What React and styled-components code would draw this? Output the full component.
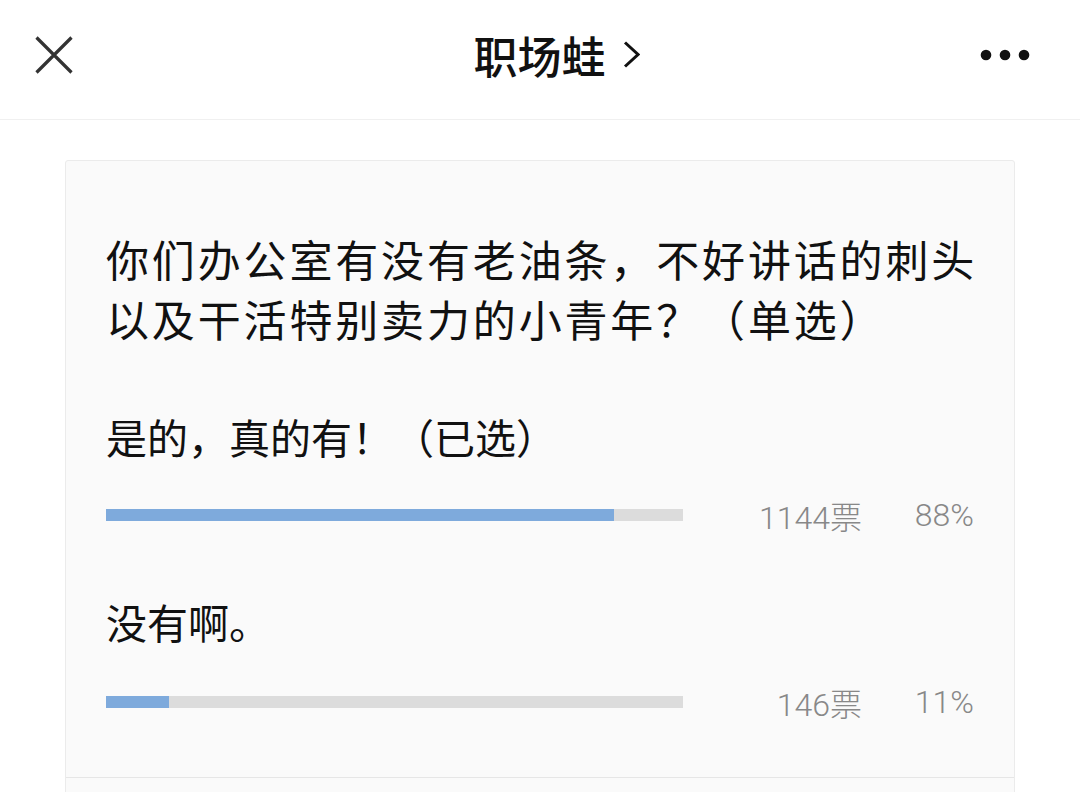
import React from 'react';
import styled, { createGlobalStyle } from 'styled-components';

const GlobalStyle = createGlobalStyle`
  html, body {
    margin: 0;
    padding: 0;
    background: #ffffff;
    font-family: "Noto Sans CJK SC", "Noto Sans", sans-serif;
  }
`;

const Page = styled.div`
  width: 1080px;
  height: 792px;
  overflow: hidden;
  background: #fff;
`;

const Header = styled.div`
  height: 120px;
  border-bottom: 1px solid #f0f0f0;
  display: grid;
  grid-template-columns: 1fr auto 1fr;
  align-items: center;
  padding: 0 50px 10px 35px;
  box-sizing: border-box;
`;

const IconBtn = styled.div`
  display: flex;
  align-items: center;
  justify-content: ${p => p.align || 'center'};
`;

const Title = styled.div`
  display: flex;
  align-items: center;
  gap: 17px;
  font-size: 44px;
  font-weight: 500;
  color: #111;
  margin-left: 48px;
`;

const Body = styled.div`
  padding: 40px 65px 0;
`;

const Card = styled.div`
  background: #fafafa;
  border: 1px solid #ebebeb;
  border-radius: 3px;
  height: 700px;
`;

const Inner = styled.div`
  padding: 67px 40px 55px;
  border-bottom: 1px solid #e6e6e6;
`;

const Question = styled.div`
  font-size: 43px;
  line-height: 60px;
  color: #111;
  letter-spacing: 2.85px;
  white-space: nowrap;
`;

const Option = styled.div`
  margin-top: ${p => (p.first ? '58px' : '56px')};
`;

const OptionText = styled.div`
  font-size: 41px;
  line-height: 60px;
  color: #111;
`;

const StatRow = styled.div`
  display: flex;
  align-items: center;
  margin-top: ${p => (p.first ? '29px' : '31px')};
  height: 40px;
`;

const Track = styled.div`
  width: 577px;
  height: 12px;
  background: #dcdcdc;
  flex: none;
`;

const Fill = styled.div`
  height: 100%;
  background: #7eaadc;
`;

const Count = styled.div`
  width: 179px;
  text-align: right;
  font-size: 32px;
  font-weight: 300;
  color: #888;
  font-family: "Roboto", "Noto Sans CJK SC", sans-serif;
`;

const Percent = styled.div`
  width: 112px;
  text-align: right;
  font-size: 32px;
  font-weight: 300;
  color: #888;
  font-family: "Roboto", "Noto Sans", sans-serif;
`;

const options = [
  { text: '是的，真的有！（已选）', votes: 1144, pct: 88, fill: 508 },
  { text: '没有啊。', votes: 146, pct: 11, fill: 63 },
];

export default function App() {
  return (
    <Page>
      <GlobalStyle />
      <Header>
        <IconBtn align="flex-start">
          <svg width="38" height="38" viewBox="0 0 38 38">
            <path d="M1.5 1.5 L36.5 36.5 M36.5 1.5 L1.5 36.5" stroke="#333" strokeWidth="3.2" fill="none" />
          </svg>
        </IconBtn>
        <Title>
          职场蛙
          <svg width="17" height="27" viewBox="0 0 17 27">
            <path d="M2 1.5 L15 13.5 L2 25.5" stroke="#111" strokeWidth="3" fill="none" />
          </svg>
        </Title>
        <IconBtn align="flex-end">
          <svg width="50" height="12" viewBox="0 0 50 12">
            <circle cx="6" cy="6" r="5.3" fill="#111" />
            <circle cx="25" cy="6" r="5.3" fill="#111" />
            <circle cx="44" cy="6" r="5.3" fill="#111" />
          </svg>
        </IconBtn>
      </Header>
      <Body>
        <Card>
          <Inner>
            <Question>
              你们办公室有没有老油条，不好讲话的刺头<br />以及干活特别卖力的小青年？（单选）
            </Question>
            {options.map((o, i) => (
              <Option key={i} first={i === 0}>
                <OptionText>{o.text}</OptionText>
                <StatRow first={i === 0}>
                  <Track>
                    <Fill style={{ width: o.fill }} />
                  </Track>
                  <Count>{o.votes}票</Count>
                  <Percent>{o.pct}%</Percent>
                </StatRow>
              </Option>
            ))}
          </Inner>
        </Card>
      </Body>
    </Page>
  );
}
